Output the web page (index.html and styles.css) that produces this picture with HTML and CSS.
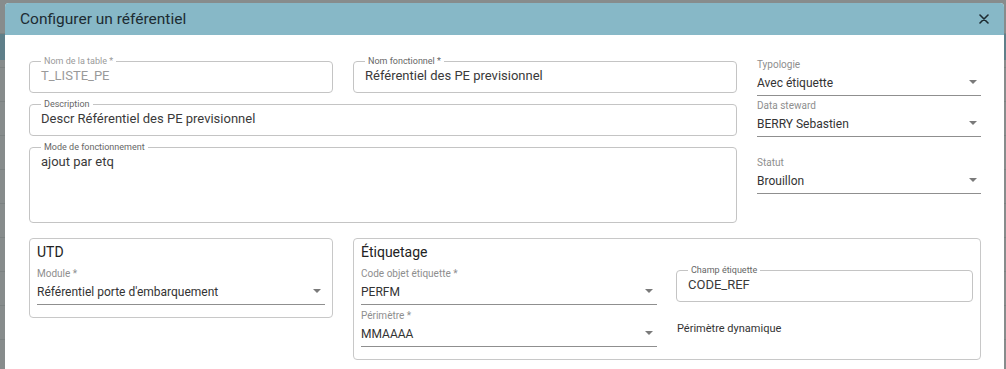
FILE: index.html
```html
<!DOCTYPE html>
<html lang="fr">
<head>
    <meta charset="UTF-8">
    <meta name="viewport" content="width=device-width, initial-scale=1.0">
    <title>Configurer un référentiel</title>
    <link rel="stylesheet" href="styles.css">
</head>
<body>
    <div class="dialog">
        <div class="dialog-header">
            <h1>Configurer un référentiel</h1>
            <button class="close" aria-label="Fermer">
                <svg width="10" height="10" viewBox="0 0 10 10">
                    <path d="M1 1 L9 9 M9 1 L1 9" stroke="#1e2b31" stroke-width="1.6" stroke-linecap="round"/>
                </svg>
            </button>
        </div>

        <div class="dialog-body">
            <div class="top-grid">
                <div class="left-col">
                    <div class="row-two">
                        <fieldset class="outlined disabled">
                            <legend>Nom de la table *</legend>
                            <div class="value">T_LISTE_PE</div>
                        </fieldset>
                        <fieldset class="outlined">
                            <legend>Nom fonctionnel *</legend>
                            <div class="value">Référentiel des PE previsionnel</div>
                        </fieldset>
                    </div>
                    <fieldset class="outlined">
                        <legend>Description</legend>
                        <div class="value">Descr Référentiel des PE previsionnel</div>
                    </fieldset>
                    <fieldset class="outlined multiline">
                        <legend>Mode de fonctionnement</legend>
                        <div class="value">ajout par etq</div>
                    </fieldset>
                </div>

                <div class="right-col">
                    <div class="select">
                        <div class="select-label">Typologie</div>
                        <div class="select-control"><span>Avec étiquette</span><i class="arrow"></i></div>
                    </div>
                    <div class="select">
                        <div class="select-label">Data steward</div>
                        <div class="select-control"><span>BERRY Sebastien</span><i class="arrow"></i></div>
                    </div>
                    <div class="select statut">
                        <div class="select-label">Statut</div>
                        <div class="select-control"><span>Brouillon</span><i class="arrow"></i></div>
                    </div>
                </div>
            </div>

            <div class="bottom-grid">
                <div class="panel">
                    <h2>UTD</h2>
                    <div class="select">
                        <div class="select-label">Module *</div>
                        <div class="select-control"><span>Référentiel porte d'embarquement</span><i class="arrow"></i></div>
                    </div>
                </div>

                <div class="panel">
                    <h2>Étiquetage</h2>
                    <div class="panel-grid">
                        <div class="panel-col">
                            <div class="select">
                                <div class="select-label">Code objet étiquette *</div>
                                <div class="select-control"><span>PERFM</span><i class="arrow"></i></div>
                            </div>
                            <div class="select perimetre">
                                <div class="select-label">Périmètre *</div>
                                <div class="select-control"><span>MMAAAA</span><i class="arrow"></i></div>
                            </div>
                        </div>
                        <div class="panel-col">
                            <fieldset class="outlined">
                                <legend>Champ étiquette</legend>
                                <div class="value">CODE_REF</div>
                            </fieldset>
                            <div class="plain-text">Périmètre dynamique</div>
                        </div>
                    </div>
                </div>
            </div>
        </div>
    </div>
</body>
</html>
```

FILE: styles.css
```css
body {
    margin: 0;
    height: 100vh;
    overflow: hidden;
    font-family: 'Roboto', 'Liberation Sans', sans-serif;
    color: #333;
    background:
        linear-gradient(to bottom, transparent 34px, #5f7f89 34px, #5f7f89 60px, transparent 60px),
        repeating-linear-gradient(to bottom, #878c8c 0, #878c8c 33px, #7c8282 33px, #7c8282 34px);
}
.dialog {
    margin: 3px 2px 0 5px;
    height: calc(100vh - 3px);
    background: white;
    border-radius: 4px 4px 0 0;
    overflow: hidden;
}
.dialog-header {
    height: 32px;
    background-color: #87b8c7;
    display: flex;
    justify-content: space-between;
    align-items: center;
    padding: 0 13px 0 15px;
}
.dialog-header h1 {
    margin: 0;
    font-size: 15.5px;
    font-weight: 400;
    color: #1d2c33;
}
.close {
    background: none;
    border: none;
    padding: 0;
    width: 14px;
    height: 14px;
    display: flex;
    align-items: center;
    justify-content: center;
}
.dialog-body {
    padding: 21px 23px 0 24px;
}
.top-grid {
    display: grid;
    grid-template-columns: 708px 224px;
    gap: 20px;
}
.left-col {
    display: flex;
    flex-direction: column;
    gap: 6px;
}
.row-two {
    display: grid;
    grid-template-columns: 304px 384px;
    gap: 20px;
}

/* outlined fields */
.outlined {
    margin: 0;
    padding: 0 11px 7px;
    border: 1px solid #c4c4c4;
    border-radius: 4px;
    min-width: 0;
}
.outlined legend {
    font-size: 9px;
    line-height: 11px;
    color: #666;
    padding: 0 3px;
    margin-left: 0;
}
.outlined .value {
    font-size: 13px;
    line-height: 18px;
    color: #3a3a3a;
}
.outlined.disabled legend,
.outlined.disabled .value {
    color: #9a9a9a;
}
.outlined.multiline {
    height: 81px;
    box-sizing: border-box;
}

/* selects */
.right-col {
    display: flex;
    flex-direction: column;
    padding-top: 3px;
}
.right-col .select + .select {
    margin-top: 4px;
}
.right-col .select.statut {
    margin-top: 20px;
}
.select-label {
    font-size: 10px;
    line-height: 12px;
    color: #8e8e8e;
    margin-bottom: 3px;
}
.select-control {
    display: flex;
    justify-content: space-between;
    align-items: center;
    font-size: 12px;
    line-height: 18px;
    color: #333;
    padding-bottom: 3px;
    border-bottom: 1px solid #8f8f8f;
}
.arrow {
    width: 0;
    height: 0;
    border-left: 4px solid transparent;
    border-right: 4px solid transparent;
    border-top: 4px solid #7a7a7a;
    margin-right: 4px;
    margin-top: -2px;
}

/* bottom panels */
.bottom-grid {
    display: grid;
    grid-template-columns: 304px 628px;
    gap: 20px;
    margin-top: 15px;
    align-items: start;
}
.panel {
    border: 1px solid #c8c8c8;
    border-radius: 4px;
    padding: 5px 7px 12px;
}
.panel h2 {
    margin: 0 0 8px;
    font-size: 14px;
    font-weight: 400;
    line-height: 16px;
    color: #222;
}
.panel-grid {
    display: grid;
    grid-template-columns: 296px 297px;
    gap: 19px;
}
.panel-col {
    display: flex;
    flex-direction: column;
}
.panel .perimetre {
    margin-top: 5px;
}
.panel-col .outlined {
    margin-top: -3px;
}
.plain-text {
    font-size: 11px;
    line-height: 14px;
    color: #333;
    margin-top: 20px;
    padding-left: 1px;
}
```
